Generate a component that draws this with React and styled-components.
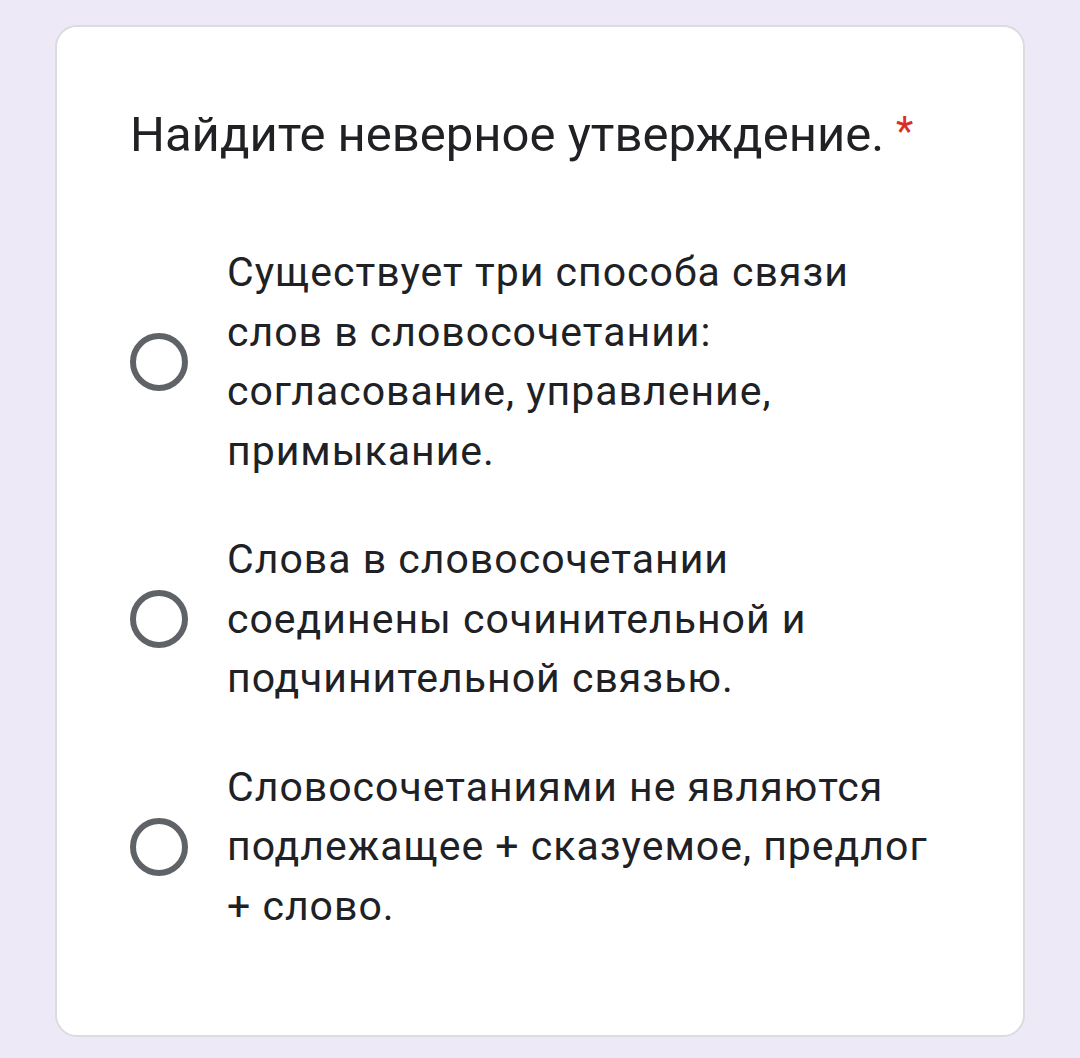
import styled, { createGlobalStyle } from 'styled-components'

const GlobalStyle = createGlobalStyle`
  html, body {
    margin: 0;
    padding: 0;
    background: #ede9f7;
  }
  body {
    font-family: Roboto, 'Noto Sans', Arial, sans-serif;
  }
`

const Page = styled.div`
  padding: 25px 55px 21px 55px;
  min-height: 1058px;
  box-sizing: border-box;
`

const Card = styled.div`
  box-sizing: border-box;
  width: 970px;
  height: 1012px;
  background: #ffffff;
  border: 2px solid #dadce0;
  border-radius: 22px;
  padding: 76px 90px 0 73px;
  display: flex;
  flex-direction: column;
`

const Title = styled.div`
  font-size: 49px;
  line-height: 64px;
  color: #202124;
  font-weight: 400;
`

const Required = styled.span`
  color: #d93025;
  font-size: 40px;
  vertical-align: top;
  line-height: 58px;
  margin-left: 12px;
`

const Options = styled.div`
  margin-top: 76px;
  display: flex;
  flex-direction: column;
  gap: 49px;
`

const Option = styled.label`
  display: flex;
  align-items: center;
  gap: 39px;
  cursor: pointer;
`

const Radio = styled.span`
  flex: none;
  box-sizing: border-box;
  width: 58px;
  height: 58px;
  border-radius: 50%;
  border: 6px solid #5f6368;
`

const Label = styled.span`
  flex: 1;
  font-size: 41px;
  line-height: 59.5px;
  color: #202124;
  letter-spacing: 1px;
`

const options = [
  'Существует три способа связи слов в словосочетании: согласование, управление, примыкание.',
  'Слова в словосочетании соединены сочинительной и подчинительной связью.',
  'Словосочетаниями не являются подлежащее + сказуемое, предлог + слово.',
]

const App = () => (
  <Page>
    <GlobalStyle />
    <Card>
      <Title>
        Найдите неверное утверждение.<Required>*</Required>
      </Title>
      <Options>
        {options.map((text) => (
          <Option key={text}>
            <Radio />
            <Label>{text}</Label>
          </Option>
        ))}
      </Options>
    </Card>
  </Page>
)

export default App
